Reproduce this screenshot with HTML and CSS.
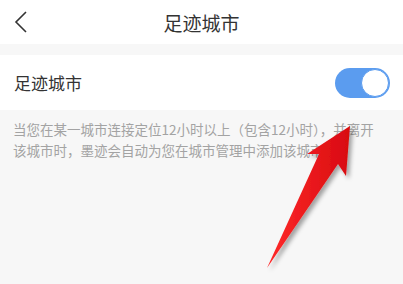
FILE: index.html
```html
<!DOCTYPE html>
<html lang="zh">
<head>
<meta charset="utf-8">
<link rel="stylesheet" href="styles.css">
</head>
<body>
<div class="page">
  <header class="nav">
    <span class="back">
      <svg width="14" height="22" viewBox="0 0 14 22"><path d="M12 1 L2 11 L12 21" fill="none" stroke="#333" stroke-width="1.6"/></svg>
    </span>
    <h1 class="title">足迹城市</h1>
  </header>
  <div class="gap"></div>
  <div class="row">
    <span class="label">足迹城市</span>
    <span class="toggle"><span class="knob"></span></span>
  </div>
  <p class="desc">当您在某一城市连接定位12小时以上（包含12小时），并离开该城市时，墨迹会自动为您在城市管理中添加该城市。</p>
  <svg class="arrow" width="403" height="284" viewBox="0 0 403 284">
    <defs>
      <linearGradient id="g" x1="0" y1="0" x2="1" y2="0">
        <stop offset="0" stop-color="#ff2a2a"/>
        <stop offset="1" stop-color="#d80a10"/>
      </linearGradient>
      <filter id="s" x="-20%" y="-20%" width="140%" height="140%">
        <feDropShadow dx="3" dy="3" stdDeviation="2" flood-color="#000" flood-opacity="0.35"/>
      </filter>
    </defs>
    <polygon filter="url(#s)" fill="url(#g)" points="350,126 346,176 338,164 267,268 319,154 307,154"/>
  </svg>
</div>
</body>
</html>
```
FILE: styles.css
```css
* { box-sizing: border-box; }
html, body { margin: 0; padding: 0; }
body { background: #f7f7f7; font-family: "Noto Sans CJK SC", "Noto Sans", sans-serif; }
.page { position: relative; width: 403px; height: 284px; overflow: hidden; background: #f7f7f7; }
.nav { height: 44px; background: #fff; display: flex; align-items: center; justify-content: center; position: relative; }
.back { position: absolute; left: 14px; top: 11px; display: flex; }
.title { margin: 0; font-size: 19px; font-weight: 400; color: #333; line-height: 1; }
.gap { height: 11px; }
.row { height: 55px; background: #fff; display: flex; align-items: center; justify-content: space-between; padding: 0 13px 0 14px; }
.label { font-size: 17px; color: #333; }
.toggle { width: 55px; height: 30px; border-radius: 15px; background: #5b9cef; display: flex; align-items: center; justify-content: flex-end; padding-right: 1px; }
.knob { width: 28px; height: 28px; border-radius: 50%; background: #fff; border: 1.5px solid #5b9cef; }
.desc { margin: 0; padding: 9px 16px 0 13px; font-size: 13.5px; line-height: 21px; color: #a3a3a3; }
.arrow { position: absolute; left: 0; top: 0; }
```
